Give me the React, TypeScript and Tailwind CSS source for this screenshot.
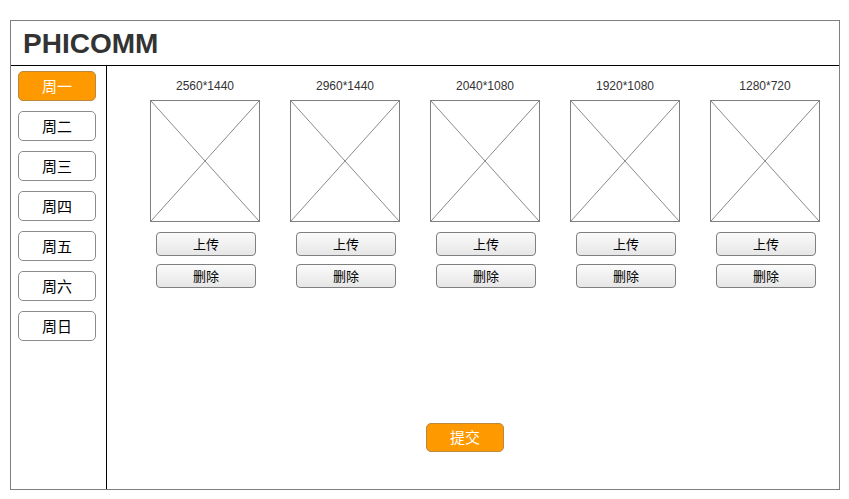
import React from "react";

const days = ["周一", "周二", "周三", "周四", "周五", "周六", "周日"];
const sizes = ["2560*1440", "2960*1440", "2040*1080", "1920*1080", "1280*720"];

const font = { fontFamily: '"Liberation Sans", Arial, "Noto Sans CJK SC", sans-serif' };

function Placeholder() {
  return (
    <div className="w-[110px] h-[122px] border border-[#7f7f7f] bg-white">
      <svg width="108" height="120" viewBox="0 0 108 120" className="block">
        <line x1="0" y1="0" x2="108" y2="120" stroke="#8a8a8a" strokeWidth="1" />
        <line x1="108" y1="0" x2="0" y2="120" stroke="#8a8a8a" strokeWidth="1" />
      </svg>
    </div>
  );
}

function GrayButton({ label }: { label: string }) {
  return (
    <button className="w-[100px] h-[24px] rounded-[4px] border border-[#7f7f7f] bg-gradient-to-b from-[#fbfbfb] to-[#e6e6e6] text-[13px] text-black leading-none flex items-center justify-center">
      {label}
    </button>
  );
}

export default function App() {
  return (
    <div className="w-[849px] h-[499px] bg-white pt-[20px] pl-[10px]" style={font}>
      <div className="w-[830px] h-[470px] border border-[#7f7f7f] flex flex-col">
        <div className="h-[45px] border-b border-black pl-[12px] flex items-center shrink-0">
          <span className="text-[28px] font-bold text-[#333333] leading-none mt-[1px]">PHICOMM</span>
        </div>
        <div className="flex flex-1">
          <div className="w-[96px] border-r border-black pl-[7px] pt-[5px] flex flex-col gap-[10px] shrink-0">
            {days.map((d, i) => (
              <button
                key={d}
                className={
                  i === 0
                    ? "w-[78px] h-[30px] rounded-[5px] border border-[#b8893f] bg-[#ff9900] text-white text-[15px] leading-none flex items-center justify-center"
                    : "w-[78px] h-[30px] rounded-[5px] border border-[#8c8c8c] bg-white text-black text-[15px] leading-none flex items-center justify-center"
                }
              >
                {d}
              </button>
            ))}
          </div>
          <div className="flex-1 flex flex-col">
            <div className="flex gap-[30px] pl-[43px] pt-[12px]">
              {sizes.map((s) => (
                <div key={s} className="flex flex-col items-center w-[110px]">
                  <div className="h-[16px] leading-[16px] text-[12px] text-[#333333]">{s}</div>
                  <div className="mt-[6px]">
                    <Placeholder />
                  </div>
                  <div className="mt-[10px] ml-[2px] flex flex-col gap-[8px] items-center">
                    <GrayButton label="上传" />
                    <GrayButton label="删除" />
                  </div>
                </div>
              ))}
            </div>
            <div className="mt-[135px] pl-[319px]">
              <button className="w-[78px] h-[29px] rounded-[5px] border border-[#b8893f] bg-[#ff9900] text-white text-[15px] leading-none flex items-center justify-center">
                提交
              </button>
            </div>
          </div>
        </div>
      </div>
    </div>
  );
}
